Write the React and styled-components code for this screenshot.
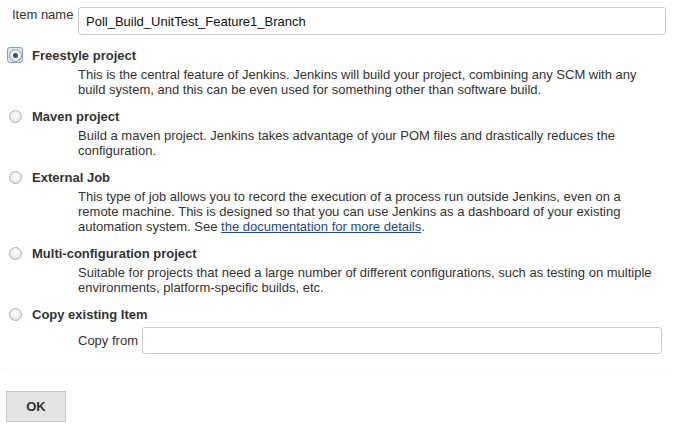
import React from "react";
import styled, { createGlobalStyle } from "styled-components";

const Global = createGlobalStyle`
  html, body { margin: 0; padding: 0; background: #fff; }
  body {
    font-family: "Liberation Sans", Arial, sans-serif;
    font-size: 13px;
    color: #333;
  }
`;

const Page = styled.div`
  width: 680px;
  padding-top: 7px;
  box-sizing: border-box;
`;

const NameRow = styled.div`
  display: flex;
  align-items: flex-start;
  padding-left: 12px;
`;

const FieldLabel = styled.label`
  width: ${(p) => p.$width}px;
  line-height: 15px;
  flex: none;
  white-space: nowrap;
`;

const TextInput = styled.input`
  box-sizing: border-box;
  width: ${(p) => p.$width}px;
  height: ${(p) => p.$height}px;
  border: 1px solid #cccccc;
  border-radius: 3px;
  padding: 0 7px;
  font-family: "Liberation Sans", Arial, sans-serif;
  font-size: 13px;
  color: #111;
  outline: none;
  background: #fff;
`;

const OptionList = styled.div`
  display: flex;
  flex-direction: column;
  gap: 10px;
  margin-top: 11px;
`;

const Option = styled.div`
  display: flex;
  flex-direction: column;
`;

const TitleRow = styled.div`
  display: flex;
  align-items: center;
  height: 18px;
  padding-left: 7px;
  gap: 9px;
`;

const RadioBox = styled.span`
  box-sizing: border-box;
  width: 16px;
  height: 16px;
  display: flex;
  align-items: center;
  justify-content: center;
  border-radius: 3px;
  border: 1px solid ${(p) => (p.$checked ? "#76a3e2" : "transparent")};
  background: ${(p) => (p.$checked ? "#d9e7f8" : "transparent")};
`;

const RadioCircle = styled.span`
  box-sizing: border-box;
  width: 13px;
  height: 13px;
  border-radius: 50%;
  border: 1px solid ${(p) => (p.$checked ? "#9c9c9c" : "#b3b3b3")};
  background: radial-gradient(circle at 50% 40%, #ffffff 0%, #f0f0f0 45%, #d6d6d6 100%);
  display: flex;
  align-items: center;
  justify-content: center;
  &::after {
    content: "";
    width: 5px;
    height: 5px;
    border-radius: 50%;
    background: #4d4d4d;
    display: ${(p) => (p.$checked ? "block" : "none")};
  }
`;

const Title = styled.span`
  font-weight: bold;
  font-size: 13px;
  color: #333;
`;

const Description = styled.div`
  margin: 3px 0 0 78px;
  width: 585px;
  line-height: 15px;
  color: #333;
`;

const Link = styled.a`
  color: #204a87;
  text-decoration: underline;
`;

const CopyRow = styled.div`
  display: flex;
  align-items: center;
  margin: 4px 0 0 78px;
`;

const Divider = styled.div`
  margin: 15px 0 0 0;
  border-top: 1px dotted #f6f6f6;
  width: 670px;
`;

const OkButton = styled.button`
  box-sizing: border-box;
  margin: 21px 0 0 6px;
  width: 60px;
  height: 31px;
  background: #e3e3e3;
  border: 1px solid #c8c8c8;
  border-radius: 0;
  font-family: "Liberation Sans", Arial, sans-serif;
  font-size: 13px;
  font-weight: bold;
  color: #333;
  padding: 0;
`;

const options = [
  {
    title: "Freestyle project",
    checked: true,
    desc: "This is the central feature of Jenkins. Jenkins will build your project, combining any SCM with any build system, and this can be even used for something other than software build.",
  },
  {
    title: "Maven project",
    desc: "Build a maven project. Jenkins takes advantage of your POM files and drastically reduces the configuration.",
  },
  {
    title: "External Job",
    desc: (
      <>
        This type of job allows you to record the execution of a process run outside Jenkins, even on a
        remote machine. This is designed so that you can use Jenkins as a dashboard of your existing
        automation system. See <Link href="#">the documentation for more details</Link>.
      </>
    ),
  },
  {
    title: "Multi-configuration project",
    desc: "Suitable for projects that need a large number of different configurations, such as testing on multiple environments, platform-specific builds, etc.",
  },
];

export default function App() {
  return (
    <Page>
      <Global />
      <NameRow>
        <FieldLabel $width={66}>Item name</FieldLabel>
        <TextInput $width={588} $height={28} defaultValue="Poll_Build_UnitTest_Feature1_Branch" />
      </NameRow>
      <OptionList>
        {options.map((o) => (
          <Option key={o.title}>
            <TitleRow>
              <RadioBox $checked={o.checked}>
                <RadioCircle $checked={o.checked} />
              </RadioBox>
              <Title>{o.title}</Title>
            </TitleRow>
            <Description>{o.desc}</Description>
          </Option>
        ))}
        <Option>
          <TitleRow>
            <RadioBox>
              <RadioCircle />
            </RadioBox>
            <Title>Copy existing Item</Title>
          </TitleRow>
          <CopyRow>
            <FieldLabel $width={64}>Copy from</FieldLabel>
            <TextInput $width={520} $height={27} />
          </CopyRow>
        </Option>
      </OptionList>
      <Divider />
      <OkButton>OK</OkButton>
    </Page>
  );
}
